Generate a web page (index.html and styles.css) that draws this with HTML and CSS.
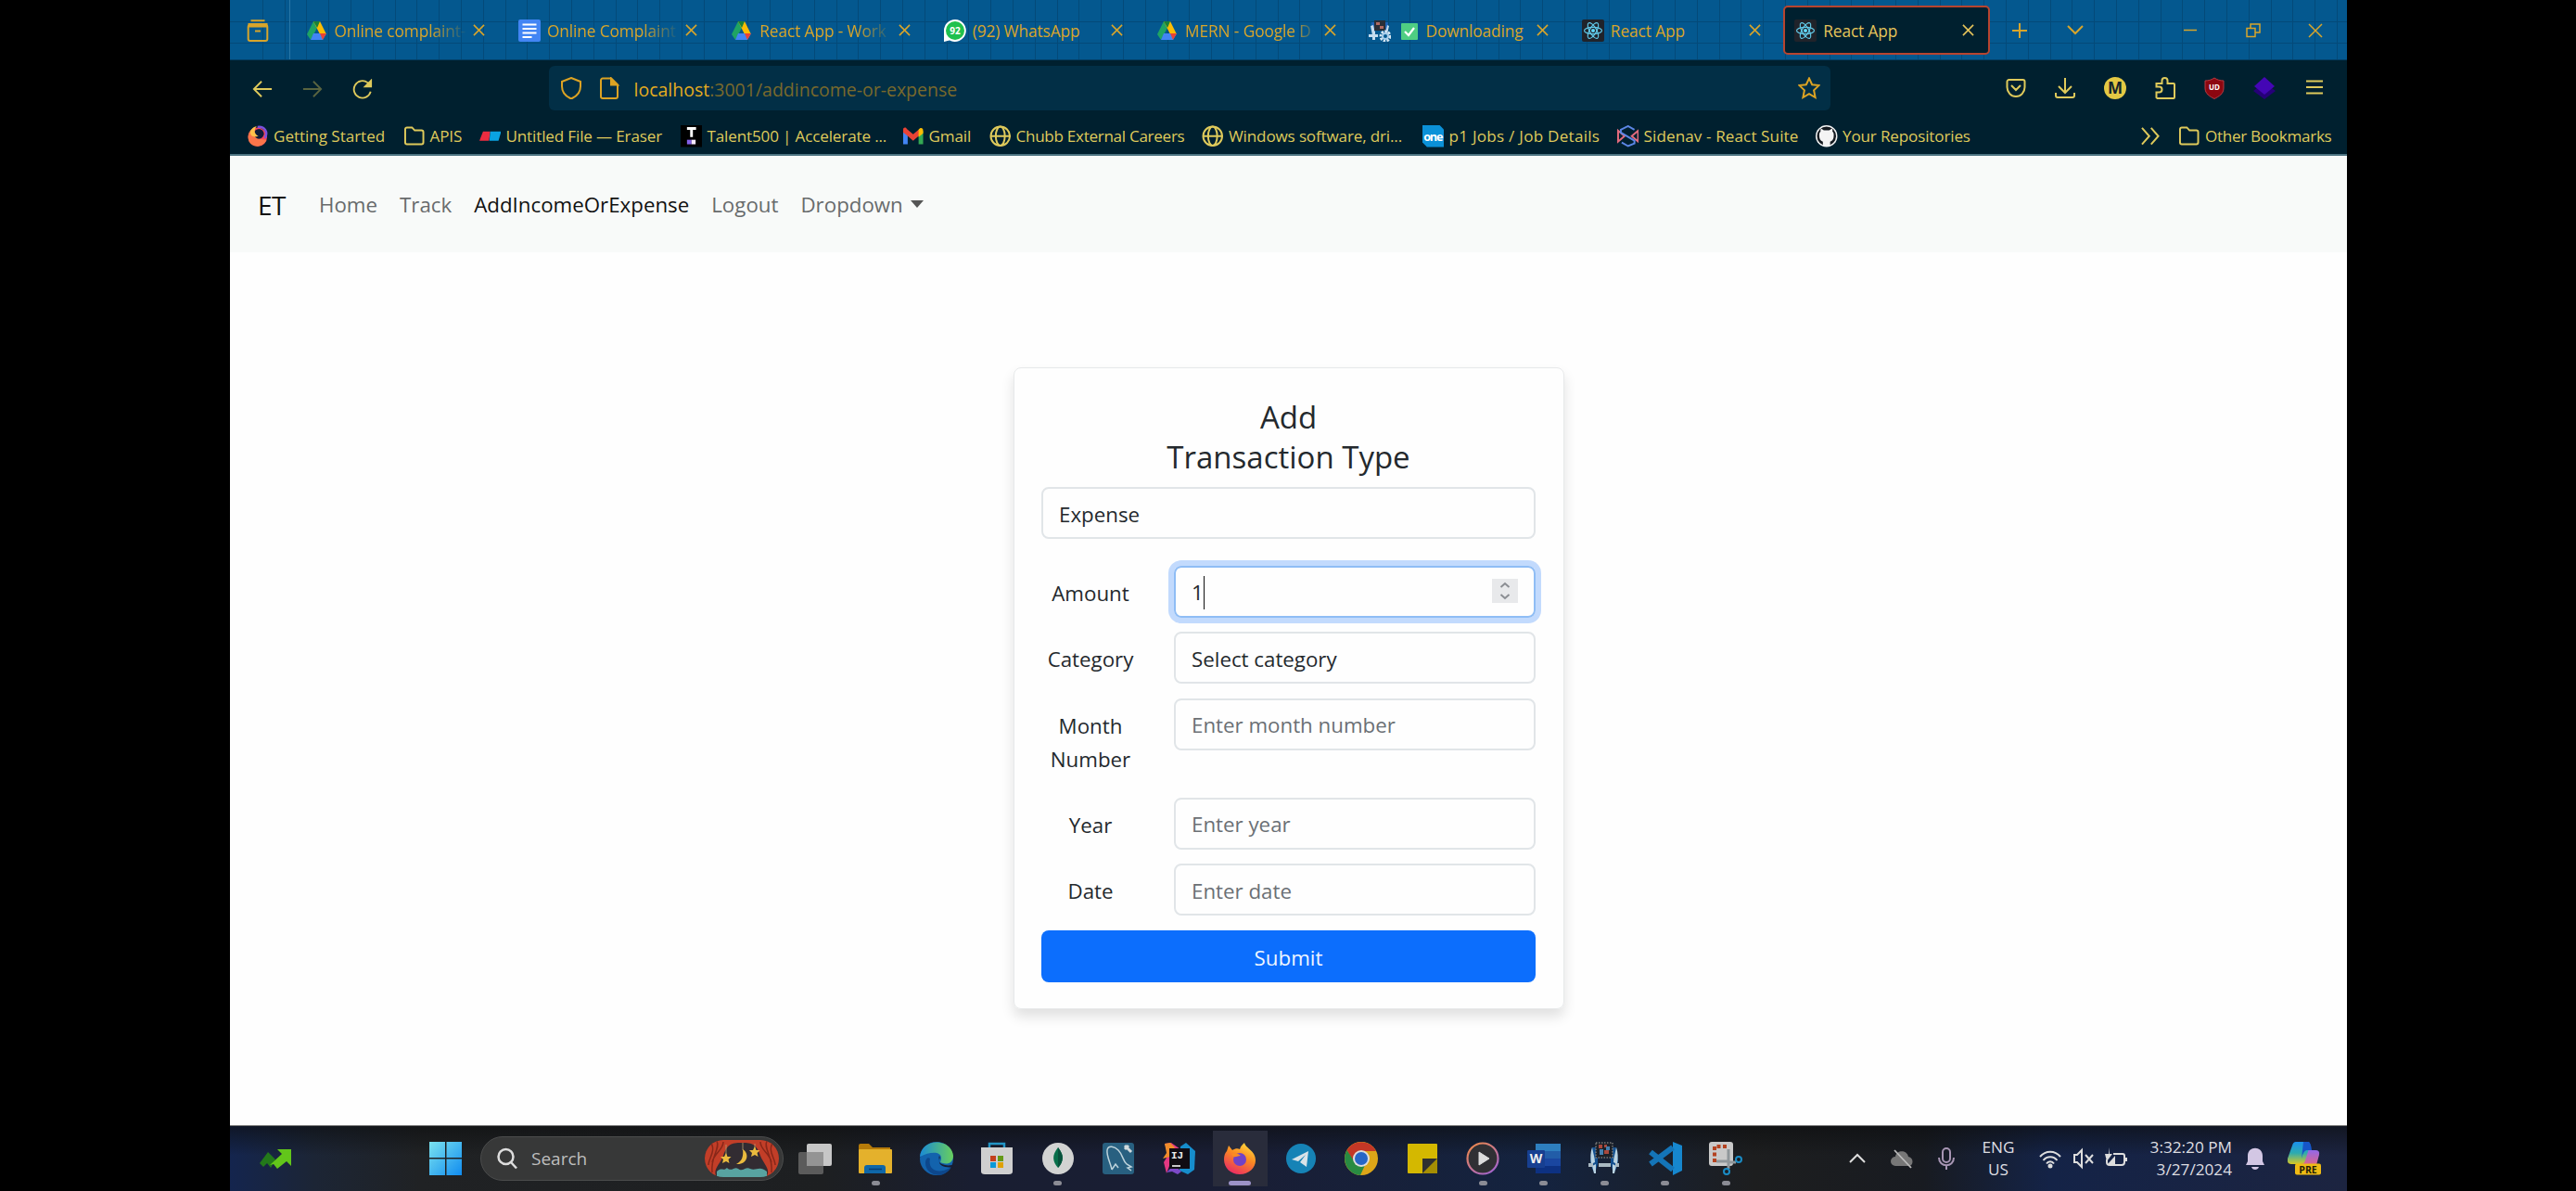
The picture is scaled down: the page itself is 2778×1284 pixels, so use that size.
FILE: index.html
```html
<!DOCTYPE html>
<html lang="en">
<head>
<meta charset="utf-8">
<title>React App</title>
<link rel="stylesheet" href="styles.css">
</head>
<body>
<svg class="defs" width="0" height="0" aria-hidden="true">
  <symbol id="drive" viewBox="0 0 24 24"><path fill="#1fa463" d="M8 2 1 16l4 6L12 9z"/><path fill="#fbbc04" d="M8 2h7l7 14h-7z"/><path fill="#4285f4" d="M5 22l3-7h14l-4 7z"/><path fill="#ea4335" d="M15 15h7l-4 7z"/><path fill="#188038" d="M8 2h7l-3 7z"/></symbol>
  <symbol id="x" viewBox="0 0 14 14"><path d="M1 1 13 13M13 1 1 13"/></symbol>
  <symbol id="react" viewBox="0 0 24 24"><rect width="24" height="24" rx="2" fill="#20232a"/><g fill="none" stroke="#61c9e8" stroke-width="1.2"><ellipse cx="12" cy="12" rx="9.500" ry="3.700"/><ellipse cx="12" cy="12" rx="9.500" ry="3.700" transform="rotate(60 12 12)"/><ellipse cx="12" cy="12" rx="9.500" ry="3.700" transform="rotate(120 12 12)"/></g><circle cx="12" cy="12" r="2" fill="#61dafb"/></symbol>
  <symbol id="folder" viewBox="0 0 24 24"><path d="M2 19V4.500a2 2 0 0 1 2-2h5.500l3 3.200H20a2 2 0 0 1 2 2V19a2 2 0 0 1-2 2H4a2 2 0 0 1-2-2z"/></symbol>
  <symbol id="globe" viewBox="0 0 24 24"><circle cx="12" cy="12" r="10.500"/><ellipse cx="12" cy="12" rx="5" ry="10.500"/><path d="M1.500 12h21"/></symbol>
  <symbol id="robot" viewBox="0 0 36 36"><path fill="#14508f" d="M5 6h4l2 8v10l-3 10-3-5-2-8zM31 6h-4l-2 8v10l3 10 3-5 2-8z"/><path fill="#b9d3e2" d="M5 6c1 6 3 11 3 16l-4 2c-1-7-1-13 1-18zM31 6c-1 6-3 11-3 16l4 2c1-7 1-13-1-18zM5 26l4-2v10H7zM31 26l-4-2v10h2z"/><path fill="#a9b9c2" d="M1 23h5v4H1zM12 23h13v4H12zM30 23h4v4h-4z"/><rect x="9" y="1" width="18" height="16" fill="#1b2028" stroke="#777" stroke-width="1.500" stroke-dasharray="1.500"/><path fill="#a8483d" d="M12 3h4v4h-4zM18 3h3v3h-3zM18 9h5v4h-5z"/><path fill="#4480b0" d="M13 8h4v6h-4zM20 5h4v4h-4z"/></symbol>
  <symbol id="firefox" viewBox="0 0 36 36"><defs><linearGradient id="ffg" x1=".8" y1="0" x2=".3" y2="1"><stop offset="0" stop-color="#ffdf3e"/><stop offset=".45" stop-color="#fb8a22"/><stop offset="1" stop-color="#e92a64"/></linearGradient></defs><path fill="url(#ffg)" d="M6 4l4 5c3-2 6-2 8-1 1-4 4-6 5-7 1 6 12 8 12 19 0 8-7 15-17 15S1 28 1 19c0-4 1-7 3-9z"/><circle cx="18" cy="19" r="7" fill="#7142c6"/><path fill="#fb8a22" d="M9 13c5-2 8 0 10 2-4 0-5 2-8 1z"/></symbol>
</svg>
<div class="screen">
  <header class="browser">
    <div class="tabs">
      <div class="history"><svg class="line" width="24" height="24" viewBox="0 0 24 24"><path d="M4.500 1.300h15M2.500 5h19v2.500h-19z"/><rect x="1.700" y="6" width="20.600" height="17" rx="2"/><path d="M9 12.500h6"/></svg></div>
      <div class="tab"><svg class="fav"><use href="#drive"/></svg><span class="title fade">Online complaint-</span><svg class="close"><use href="#x"/></svg></div>
      <div class="tab"><svg class="fav" viewBox="0 0 24 24"><rect width="24" height="24" rx="2" fill="#4285f4"/><path stroke="#fff" stroke-width="2" d="M4.500 5.500h15M4.500 10h15M4.500 14.500h15M4.500 19h10"/></svg><span class="title fade">Online Complaint</span><svg class="close"><use href="#x"/></svg></div>
      <div class="tab"><svg class="fav"><use href="#drive"/></svg><span class="title fade">React App - Work</span><svg class="close"><use href="#x"/></svg></div>
      <div class="tab"><svg class="fav" viewBox="0 0 24 24"><path fill="#fff" d="M12 0a12 12 0 1 1-6 22.500L0 24V12A12 12 0 0 1 12 0z"/><circle cx="12" cy="12" r="10" fill="#1fc14d"/><text x="12" y="16" class="badge92">92</text></svg><span class="title">(92) WhatsApp</span><svg class="close"><use href="#x"/></svg></div>
      <div class="tab"><svg class="fav"><use href="#drive"/></svg><span class="title fade strong">MERN - Google D</span><svg class="close"><use href="#x"/></svg></div>
      <div class="tab"><svg class="fav" viewBox="0 0 24 24"><path fill="#1d63b8" d="M3 3h4v13H4zM17 3h4l-1 13h-3z"/><path fill="#c5dcee" d="M2 7l3-1 2 9-3 2zM22 7l-2-1-2 9 2 1zM0 16h10v3H0zM4 13h3v9H4z"/><rect x="6" y="1" width="12" height="11" fill="#2a2f38"/><path fill="#b06a62" d="M8 3h4v3H8zM12 7h4v3h-4z"/><circle cx="18" cy="18" r="5" fill="none" stroke="#d5e6f2" stroke-width="3" stroke-dasharray="2.500 1.200"/><circle cx="18" cy="18" r="3" fill="none" stroke="#a8cdea" stroke-width="2"/></svg><span class="title check"><svg width="18" height="18" viewBox="0 0 18 18"><rect width="18" height="18" rx="1" fill="#4fce82"/><path d="M4 9l4 4 6-8" fill="none" stroke="#fff" stroke-width="2.200"/></svg>Downloading</span><svg class="close"><use href="#x"/></svg></div>
      <div class="tab"><svg class="fav"><use href="#react"/></svg><span class="title">React App</span><svg class="close"><use href="#x"/></svg></div>
      <div class="tab active"><svg class="fav"><use href="#react"/></svg><span class="title">React App</span><svg class="close"><use href="#x"/></svg></div>
      <div class="controls">
        <svg class="line" viewBox="0 0 18 18"><path d="M9 1v16M1 9h16"/></svg>
        <svg class="line" viewBox="0 0 18 18"><path d="M1 4l8 8 8-8"/></svg>
        <svg class="line thin" viewBox="0 0 18 18"><path d="M2 8.500h14"/></svg>
        <svg class="line thin" viewBox="0 0 18 18"><path d="M2 6.500h9v9H2zM6 6V2h10v9h-5"/></svg>
        <svg class="line thin" viewBox="0 0 18 18"><path d="M2 2l14 14M16 2 2 16"/></svg>
      </div>
    </div>
    <div class="toolbar">
      <div class="nav-icons">
        <svg class="line" viewBox="0 0 24 24"><path d="M23 12H2M11 3l-9 9 9 9"/></svg>
        <svg class="line dim" viewBox="0 0 24 24"><path d="M1 12h21M13 3l9 9-9 9"/></svg>
        <svg class="line" viewBox="0 0 24 24"><path d="M21.500 15A10 10 0 1 1 18 4.500l3 3"/><path fill="currentColor" d="M22 2v7h-7z"/></svg>
      </div>
      <div class="url">
        <svg class="line" viewBox="0 0 24 24"><path d="M12 1 22 5v5c0 7-4 11-10 13.500C6 21 2 17 2 10V5z"/></svg>
        <svg class="line page-icon" viewBox="0 0 24 24"><path d="M14 1.500H5a2 2 0 0 0-2 2V21a2 2 0 0 0 2 2h14a2 2 0 0 0 2-2V8.500z"/><path fill="currentColor" d="M14 1.500v7h7z"/></svg>
        <span class="address"><b>localhost</b>:3001/addincome-or-expense</span>
        <svg class="line star" viewBox="0 0 24 24"><path d="M12 1.500l3.200 6.800 7.300.8-5.400 5.200 1.500 7.700L12 18.200 5.400 22l1.500-7.700L1.500 9.100l7.300-.8z"/></svg>
      </div>
      <div class="actions">
        <svg class="line" viewBox="0 0 24 24"><path d="M4.500 3h15a2 2 0 0 1 2 2v6a9.500 10 0 0 1-19 0V5a2 2 0 0 1 2-2zM7 9l5 5 5-5"/></svg>
        <svg class="line" viewBox="0 0 24 24"><path d="M12 1v15M5 10l7 7 7-7M2 17v3a2 2 0 0 0 2 2h16a2 2 0 0 0 2-2v-3"/></svg>
        <svg viewBox="0 0 24 24"><circle cx="12" cy="12" r="12" fill="#e4c944"/><text x="12" y="18" class="letter-m">M</text></svg>
        <svg class="line" viewBox="0 0 24 24"><path d="M2.500 22v-5.500h3a3 3 0 0 0 0-6h-3V7h6V4a3 3 0 0 1 6 0v3H21a1 1 0 0 1 1 1v14a1 1 0 0 1-1 1H3.500z"/></svg>
        <svg viewBox="0 0 24 24"><path fill="#8c0710" stroke="#b53b42" d="M12 1c3 2 6 3 10 3v8c0 6-5 9-10 11.500C7 21 2 18 2 12V4c4 0 7-1 10-3z"/><text x="12" y="14" class="letter-u">UD</text></svg>
        <svg viewBox="0 0 24 24"><path fill="#260078" d="M12 6 24 15 12 24 0 15z"/><path fill="#4406b5" d="M12 0 23 10 12 19 1 10z"/></svg>
        <svg class="line" viewBox="0 0 24 24"><path d="M3 4.500h18M3 11h18M3 17.500h18"/></svg>
      </div>
    </div>
    <div class="bookmarks">
      <div class="bm"><svg viewBox="0 0 24 24"><circle cx="12" cy="13" r="10.500" fill="#f4455a"/><path fill="#ff9640" d="M1.500 13C2 6 6 3 10 2c-3 5 0 14 12 14C18 26 2 26 1.500 13z" opacity=".6"/><circle cx="13.500" cy="9.500" r="5.500" fill="#101b39"/><path fill="#ffc04a" d="M4 8c0-3 3-6 7-7-4 5-2 9 2 11-5 2-9 0-9-4z"/><path d="M12 2c8-1 12 6 8 12" fill="none" stroke="#7b50dd" stroke-width="2.500"/></svg>Getting Started</div>
      <div class="bm"><svg class="line"><use href="#folder"/></svg>APIS</div>
      <div class="bm"><svg viewBox="0 0 24 24"><path fill="#ec2c40" d="M4 7h8l-1.500 10H0z"/><path fill="#0aa3e3" d="M12 7h12l-3 10H11z"/></svg>Untitled File — Eraser</div>
      <div class="bm"><svg viewBox="0 0 24 24"><rect width="24" height="24"/><path fill="#fff" d="M7 2h10v3h-3.500v8h-3V5H7z"/><path fill="#8360e8" d="M7 16h5v5H7z"/><path fill="#f5e9ff" d="M12 16h4.500v5H12z"/></svg>Talent500 | Accelerate ...</div>
      <div class="bm"><svg viewBox="0 0 24 24"><path fill="#4285f4" d="M1 6l5 4v11H1z"/><path fill="#34a853" d="M18 10l5-4v15h-5z"/><path fill="#ea4335" d="M1 5c0-3 3-3 4-1l7 6 7-6v7l-7 6-7-6-4-3z"/><path fill="#fbbc04" d="M18 5c2-3 5-2 5 1v3l-5 4z"/></svg>Gmail</div>
      <div class="bm"><svg class="line"><use href="#globe"/></svg>Chubb External Careers</div>
      <div class="bm"><svg class="line"><use href="#globe"/></svg>Windows software, dri...</div>
      <div class="bm"><svg viewBox="0 0 24 24"><path fill="#0b91d8" d="M0 0h19l5 5v19H5l-5-5z"/><text x="11.500" y="17" class="letter-one">one</text></svg>p1 Jobs / Job Details</div>
      <div class="bm"><svg viewBox="0 0 24 24" fill="none" stroke-width="2"><path stroke="#e46b7d" d="M8 12 1 18V6zM16 12l7-6v12z"/><path stroke="#5c87e6" d="M19 5l-7-4-8 4v3l15 9v3l-7 3-7-4"/></svg>Sidenav - React Suite</div>
      <div class="bm"><svg viewBox="0 0 24 24"><circle cx="12" cy="12" r="12" fill="#f4f4f4"/><circle cx="12" cy="12" r="10.500" fill="#151a20"/><path fill="#f4f4f4" d="M8 23v-5c-3-1-4-3-4-7 0-2 .5-3 1.500-4-.3-1-.2-2 .2-3 1.300 0 2.300.7 3.300 1.500h6C16 4.700 17 4 18.300 4c.4 1 .5 2 .2 3 1 1 1.500 2 1.500 4 0 4-1 6-4 7v5z"/></svg>Your Repositories</div>
      <div class="bm"><svg class="line" viewBox="0 0 24 24"><path d="M2 3l8 9-8 9M12 3l8 9-8 9"/></svg></div>
      <div class="bm"><svg class="line"><use href="#folder"/></svg>Other Bookmarks</div>
    </div>
  </header>

  <nav class="navbar">
    <a class="brand">ET</a><a>Home</a><a>Track</a><a class="current">AddIncomeOrExpense</a><a>Logout</a><a class="drop">Dropdown</a>
  </nav>

  <main class="page">
    <form class="card">
      <h2>Add<br>Transaction Type</h2>
      <div class="field type">Expense</div>
      <div class="row"><label>Amount</label><div class="field focus"><span class="typed">1</span><svg class="spin" viewBox="0 0 28 26"><path d="M9.500 9l4.500-4 4.500 4M9.500 17l4.500 4 4.500-4"/></svg></div></div>
      <div class="row"><label>Category</label><div class="field">Select category</div></div>
      <div class="row tall"><label>Month<br>Number</label><input class="field" placeholder="Enter month number"></div>
      <div class="row"><label>Year</label><input class="field" placeholder="Enter year"></div>
      <div class="row"><label>Date</label><input class="field" placeholder="Enter date"></div>
      <button class="submit" type="button">Submit</button>
    </form>
  </main>

  <footer class="taskbar">
    <div class="widget"><svg width="35" height="22" viewBox="0 0 35 22"><path fill="#23791a" d="M0 16 9 4l8 8-5 9-4-5-4 4z"/><path fill="#62c61a" d="M11 18 24 6l-5-5h15v18l-5-5-10 8-4-5z"/></svg></div>
    <div class="start"><svg width="35" height="36" viewBox="0 0 35 36"><defs><linearGradient id="wg" x1="0" y1="0" x2="1" y2="1"><stop offset="0" stop-color="#7be3ef"/><stop offset="1" stop-color="#108cf0"/></linearGradient></defs><path fill="url(#wg)" d="M0 0h17v17H0zM18.500 0H35v17H18.500zM0 18.500h17V36H0zM18.500 18.500H35V36H18.500z"/></svg></div>
    <div class="search">
      <svg width="23" height="24" viewBox="0 0 23 24" fill="none" stroke="#ddd" stroke-width="2.500"><circle cx="9.500" cy="10" r="8"/><path d="M15 16l6 6.500"/></svg>
      <span>Search</span>
      <svg class="theatre" width="80" height="40" viewBox="0 0 80 40"><defs><clipPath id="tc"><rect width="80" height="40" rx="20"/></clipPath></defs><g clip-path="url(#tc)"><rect width="80" height="40" fill="#322c32"/><path fill="#c23e28" d="M0 0h80v40H66c6-8-2-13-6-23C56 5 52 3 40 3S24 5 20 17c-4 10-12 15-7 23H0z"/><path fill="none" stroke="#872719" stroke-width="1.500" d="M6 2c7 9-2 18-2 25M13 1c4 9-7 16-5 34M20 2c0 9-10 12-12 22M74 2c-7 9 2 18 2 25M67 1c-4 9 7 16 5 34M60 2c0 9 10 12 12 22"/><path fill="#58a3a0" d="M13 34c5-5 7 0 11-4 5 5 8-2 12 1 5 4 8-3 13 0 6 3 10-4 18 3v7H13z"/></g><path fill="none" stroke="#b8a070" stroke-width=".8" d="M23 5v12M41 3v8M54 4v6"/><path fill="#eabb3e" d="M41 10c8 5 5 17-7 16 6-3 8-8 7-16zM23 14l1.500 4h4l-3 3 1 4-3.500-2-4 2 1-4-3-3h4zM54 7l1.500 4h4l-3 3 1 4-3.500-2-4 2 1-4-3-3h4z"/></svg>
    </div>
    <div class="apps">
      <div><svg viewBox="0 0 36 36"><rect y="11" width="27" height="24" rx="2" fill="#5b5b5b"/><rect x="9" y="2" width="27" height="24" rx="2" fill="#c7c7c7"/><path fill="#949494" d="M9 11h18v15H9z"/></svg></div>
      <div class="open"><svg viewBox="0 0 36 36"><path fill="#b67b09" d="M0 4q0-2 2-2h9l4 4h19v9H0z"/><rect y="8" width="36" height="26" rx="1" fill="#e4b12c"/><path fill="#0f67a8" d="M6 34v-6q0-3 3-3h17q3 0 3 3v6z"/><path stroke="#053e75" stroke-width="1.500" d="M11 29.500h14"/></svg></div>
      <div><svg viewBox="0 0 36 36"><defs><linearGradient id="eg"><stop stop-color="#1a8ad5"/><stop offset="1" stop-color="#68cf5d"/></linearGradient></defs><circle cx="18" cy="18" r="18" fill="#1363ad"/><path fill="url(#eg)" d="M0 16C2-5 34-4 36 15c0 9-8 10-14 7 5-12-9-13-22-6z"/><path fill="#0d478c" d="M11 18c-3 13 10 18 23 9-8 15-28 9-28-4 0-4 2-7 5-5z"/><path fill="#171d32" d="M21 15c2 3-2 5 1 8 3 2 7 3 13 2l2 2c-10 2-17-2-16-6 0-2-1-4 0-6z"/></svg></div>
      <div><svg viewBox="0 0 36 36"><path d="M10 8V2h16v6" fill="none" stroke="#2295c5" stroke-width="2.500"/><path fill="#cfcfcf" d="M1 6h34v26q0 3-4 3H5q-4 0-4-3z"/><path fill="#c3411e" d="M11 15h6v6h-6z"/><path fill="#649a18" d="M19 15h6v6h-6z"/><path fill="#0999d8" d="M11 22h6v6h-6z"/><path fill="#dfa104" d="M19 22h6v6h-6z"/></svg></div>
      <div class="open"><svg viewBox="0 0 36 36"><circle cx="18" cy="18" r="17" fill="#d2d3d2"/><path fill="#08704b" d="M18 6c7 9 6 15 0 22-6-7-7-13 0-22z"/><path fill="#07523c" d="M18 6c7 9 6 15 0 22z"/></svg></div>
      <div><svg viewBox="0 0 36 36"><rect x="1" y="1" width="34" height="34" rx="3" fill="#286080"/><path fill="none" stroke="#bdd3db" stroke-width="1.500" d="M11 30c-1-6-6-15-5-21s8-4 12 0c5 5 5 12 9 15l5 3-4 1 4 3M11 30l4-6 3 4"/><path stroke="#d1dadd" stroke-width="3" d="M25 4l7 7M25 8l4-4"/></svg></div>
      <div><svg viewBox="0 0 36 36"><path fill="#e33882" d="M2 2 9 1l10 7-9 10-6 16-3-12 5-8z"/><path fill="#ef8c2b" d="M2 2l6-1 5 5-5 10-8 2 4-6z"/><path fill="#168dcc" d="M19 5l6-4 10 9-1 20-7 5-9-4z"/><path fill="#7c49c8" d="M4 33l8-8 8 7-4 3-6-3z"/><rect x="7" y="7" width="22" height="22" fill="#100c13"/><path stroke="#ddd" stroke-width="1.800" d="M10 26h9"/><text x="9" y="18" class="letter-ij">IJ</text></svg></div>
      <div class="open selected"><svg><use href="#firefox"/></svg></div>
      <div><svg viewBox="0 0 36 36"><circle cx="18" cy="18" r="16" fill="#1683b6"/><path fill="#d9e3e8" d="M8 19 26 10l-2 17-7-5 6-8-8 7z"/></svg></div>
      <div><svg viewBox="0 0 36 36"><circle cx="18" cy="18" r="18" fill="#dda618"/><path fill="#c33726" d="M2.500 9A18 18 0 0 1 34 10H18l-8 12z"/><path fill="#288b42" d="M2.500 9 11 22l12 1-6 13A18 18 0 0 1 2.500 9z"/><circle cx="18" cy="18" r="9" fill="#ddd"/><circle cx="18" cy="18" r="7" fill="#2766c6"/></svg></div>
      <div><svg viewBox="0 0 36 36"><rect x="2" y="2" width="32" height="32" rx="1" fill="#d4b800"/><path fill="#a58e03" d="M34 18v16H18z"/><path fill="#2f3030" d="M18 34V18h16z"/></svg></div>
      <div class="open"><svg viewBox="0 0 36 36"><defs><linearGradient id="mg" x2=".7" y2="1"><stop stop-color="#f28a42"/><stop offset="1" stop-color="#a666c8"/></linearGradient></defs><circle cx="18" cy="18" r="16.500" fill="#303034" stroke="url(#mg)" stroke-width="2.200"/><path fill="#ddd" stroke="#ddd" stroke-linejoin="round" d="M14 11l11 7-11 7z"/></svg></div>
      <div class="open"><svg viewBox="0 0 36 36"><path fill="#2e7fbf" d="M9 2h27v8H9z"/><path fill="#225da8" d="M9 10h27v8H9z"/><path fill="#1a46a0" d="M9 18h27v8H9z"/><path fill="#0d3182" d="M9 26h27v8H9z"/><rect y="9" width="19" height="19" rx="1" fill="#173f91"/><text x="9.500" y="23" class="letter-w">W</text></svg></div>
      <div class="open"><svg><use href="#robot"/></svg></div>
      <div class="open"><svg viewBox="0 0 36 36"><path fill="#1687ce" d="M26 0l10 4v27l-10 5z"/><path fill="none" stroke="#1475b8" stroke-width="6" d="M2 11l24 19M2 24 26 6"/></svg></div>
      <div class="open"><svg viewBox="0 0 36 36"><rect width="26" height="26" rx="3" fill="#c9c9c9"/><path fill="none" stroke="#b44321" stroke-width="4" stroke-dasharray="4 2.500" d="M6 22V5h15"/><path fill="none" stroke="#8f969a" stroke-width="3" d="M21 8v14h8M8 21h13v8"/><circle cx="32" cy="19" r="3" fill="none" stroke="#1a8cc5" stroke-width="2"/><circle cx="19" cy="32" r="3" fill="none" stroke="#1a8cc5" stroke-width="2"/></svg></div>
    </div>
    <div class="tray">
      <svg viewBox="0 0 24 24"><path d="M4 16l8-8 8 8"/></svg>
      <svg viewBox="0 0 24 24"><path fill="#777" stroke="none" d="M5 20a5 5 0 0 1 0-10c1-7 12-8 14 0 6 1 6 10 0 10z"/><path stroke="#bbb" stroke-width="1.800" d="M4 3l18 19"/></svg>
      <svg class="mic" viewBox="0 0 24 24"><rect x="8" y="1" width="8" height="15" rx="4"/><path d="M4 11c0 11 16 11 16 0M12 19v5"/></svg>
      <div class="two">ENG<br>US</div>
      <svg viewBox="0 0 24 24"><path d="M1 10c6-7 16-7 22 0M4.500 14c4-5 11-5 15 0M8 17.500c2-3 6-3 8 0"/><circle cx="12" cy="20" r="1.500" fill="#ddd"/></svg>
      <svg viewBox="0 0 24 24"><path d="M2 8h3l5-5v18l-5-5H2zM14 8l8 9M22 8l-8 9"/></svg>
      <svg viewBox="0 0 24 24"><path d="M9 7h10q2 0 2 2v7q0 3-3 3H5q-3 0-3-3v-3M23 11v4"/><path fill="#ddd" stroke="none" d="M4 0v7H0l2 8 6-8H5zM3 18l8-9v9z"/></svg>
      <div class="two clock">3:32:20 PM<br>3/27/2024</div>
      <svg viewBox="0 0 24 24"><path fill="#d3c7e4" stroke="none" d="M2 19l2-4V9c0-11 16-11 16 0v6l2 4zM8 21h8c-1 4-7 4-8 0z"/></svg>
      <svg class="copilot" viewBox="0 0 36 36"><defs><linearGradient id="cg" x2="0" y2="1"><stop stop-color="#1b90ed"/><stop offset=".5" stop-color="#2cabb0"/><stop offset="1" stop-color="#d8c824"/></linearGradient><linearGradient id="cp" x2="0" y2="1"><stop stop-color="#9268e8"/><stop offset="1" stop-color="#ec6577"/></linearGradient></defs><path fill="url(#cp)" stroke="none" d="M20 9h10q5 0 4 5l-3 11q-2 4-8 3h-9z"/><path fill="url(#cg)" stroke="none" d="M9 0h12q4 0 3 4l-5 16q-1 4-5 4H4q-5 0-4-6L5 4q1-4 4-4z"/><path fill="#1656c8" stroke="none" d="M17 0h5q3 0 4 9h-5q-4 0-6 9z"/><rect x="8" y="23.500" width="28" height="12" rx="2" fill="#efbb14" stroke="none"/><text x="22" y="33.500" class="letter-pre">PRE</text></svg>
    </div>
  </footer>
</div>
</body>
</html>
```

FILE: styles.css
```css
* { box-sizing: border-box; }
body { margin: 0; background: #000; font-family: "Open Sans", "Noto Sans", sans-serif; }
svg { display: block; flex: none; }
.defs { position: absolute; }
.screen { width: 2283px; height: 1284px; margin-left: 248px; display: flex; flex-direction: column; background: #fefefe; }
.line { fill: none; stroke: currentColor; stroke-width: 2; }
.thin { stroke-width: 1.5; }

.browser { height: 168px; background: #00202f; border-bottom: 2px solid #4d7482; color: #dfca5b; }
.tabs {
  height: 65px; display: flex; align-items: center; color: #d8a52b; border-bottom: 1px solid #033e65;
  background:
    repeating-linear-gradient(90deg, transparent 0 22.800px, #044a79 22.800px 23.800px) 12px 0,
    repeating-linear-gradient(180deg, transparent 0 22.500px, #044a79 22.500px 23.500px),
    #04588f;
}
.history { width: 64.500px; height: 64px; padding: 2px 0 0 18px; display: flex; align-items: center; border-right: 1px solid #2977a6; margin-right: 5px; }
.tab { width: 223px; height: 53px; margin-right: 6.400px; padding: 1px 0 0 12px; display: flex; align-items: center; border-radius: 5px; }
.active { background: #00202f; border: 2px solid #b8442f; padding: 1px 0 0 10px; color: #e4c35a; }
.fav { width: 24px; height: 24px; margin-right: 7px; }
.title { width: 143.500px; padding-top: 2px; font-size: 17.300px; line-height: 24px; letter-spacing: -.1px; white-space: nowrap; }
.fade { -webkit-mask-image: linear-gradient(90deg, #000 72%, transparent); mask-image: linear-gradient(90deg, #000 72%, transparent); }
.strong { -webkit-mask-image: linear-gradient(90deg, #000 80%, transparent); mask-image: linear-gradient(90deg, #000 80%, transparent); }
.check { display: flex; align-items: center; gap: 8px; padding-left: 4px; }
.close { width: 13px; height: 13px; margin-left: 6px; stroke: currentColor; stroke-width: 1.7; }
.controls { display: grid; grid-template-columns: 60px 124px 68px 67px 18px; padding: 1px 0 0 16px; }
.controls svg { width: 18px; height: 18px; }
.badge92 { font: bold 10px "Open Sans", sans-serif; fill: #fff; text-anchor: middle; }

.toolbar { height: 60px; display: flex; align-items: center; }
.nav-icons { display: flex; gap: 32px; width: 343.500px; padding: 1px 0 0 24px; }
.nav-icons svg { width: 22px; height: 22px; }
.dim { opacity: .4; }
.url { width: 1382px; height: 48px; display: flex; align-items: center; border-radius: 6px; background: #022f46; color: #dda323; padding-left: 12px; }
.url svg { width: 24px; height: 24px; margin-right: 18px; }
.url .page-icon { margin-left: -1px; }
.address { flex: 1; padding-top: 3px; font-size: 19.500px; color: #79692c; margin-left: -3px; white-space: nowrap; }
.address b { font-weight: 400; color: #e5ac20; }
.url .star { margin-right: 11px; }
.actions { display: flex; gap: 29.700px; margin-left: 188px; }
.actions svg { width: 24px; height: 24px; }
.letter-m { font: bold 17px "Open Sans", sans-serif; fill: #14242b; text-anchor: middle; }
.letter-u { font: bold 8px "Open Sans", sans-serif; fill: #fff; text-anchor: middle; }
.letter-one { font: bold 13px "Open Sans", sans-serif; fill: #fff; text-anchor: middle; letter-spacing: -1.200px; }
.bookmarks { height: 42px; padding: 2px 0 0 18px; display: grid; align-items: center; grid-template-columns: 168.500px 82px 217px 239px 94px 229.500px 237.500px 210px 214.500px 349.500px 41.500px 190px; }
.bm { display: flex; align-items: center; gap: 5.500px; font-size: 17.100px; letter-spacing: -.16px; line-height: 24px; white-space: nowrap; }
.bm svg { width: 23.500px; height: 23.500px; }
.bm:nth-child(1) { letter-spacing: -.05px; }
.bm:nth-child(8) { letter-spacing: .25px; }
.bm:nth-child(9) { letter-spacing: .1px; }
.bm:nth-child(6), .bm:nth-child(12) { letter-spacing: -.3px; }

.navbar { height: 104px; background: #f8faf9; padding: 1px 0 0 30px; display: flex; align-items: center; font-size: 22.300px; color: #686b6c; }
.navbar a { margin-right: 24px; line-height: 34px; }
.navbar .brand { font-size: 28px; color: #111; margin-right: 36px; letter-spacing: -.5px; }
.navbar .current { color: #111; }
.drop::after { content: ""; display: inline-block; margin-left: 8px; vertical-align: 5px; border: 7px solid transparent; border-top: 8px solid #555; border-bottom: 0; }

.page { height: 941px; padding-top: 123.500px; }
.card { width: 594px; height: 692px; margin: 0 auto; padding: 31px 29.500px 0; border: 1px solid #e7e9ea; border-radius: 8px; box-shadow: 0 8px 14px rgba(0,0,0,.12); color: #24292d; font-size: 22.300px; }
h2 { margin: 0 0 11.500px; font-size: 33px; font-weight: 400; line-height: 43px; text-align: center; }
.field { width: 390px; height: 56px; margin: 0; padding: 2px 17px 0; border: 2px solid #e1e5e8; border-radius: 8px; background: transparent; display: flex; align-items: center; font: inherit; color: inherit; outline: 0; }
.field::placeholder { color: #6b7075; opacity: 1; }
.type { width: 533px; margin-bottom: 29px; }
.row { height: 71.400px; display: flex; justify-content: space-between; }
.tall { height: 107px; }
.row label { width: 106px; padding-top: 12px; text-align: center; line-height: 36px; }
.focus { border-color: #8fbdf5; box-shadow: 0 0 0 6px #c2dafd; justify-content: space-between; }
.typed { border-right: 1px solid #111; line-height: 36px; }
.spin { width: 28px; height: 26px; margin-top: -4px; background: #e8e9eb; fill: none; stroke: #8b8e93; stroke-width: 2; }
.submit { width: 533px; height: 56px; padding: 3px 0 0; border: 0; border-radius: 8px; background: #0c6efd; color: #eef5ff; font: inherit; }

.taskbar {
  height: 71px; border-top: 1px solid #777; display: flex; align-items: center;
  background: linear-gradient(180deg, rgba(12,13,14,.6), transparent 45%), linear-gradient(90deg, #14254e 0, #1c2535 4%, #202224 9%, #1d1f21 28%, #191e31 35%, #191e35 48%, #14233f 62%, #1d1e1f 72%, #181b21 80%, #142347 86%, #1c2440 100%);
}
.widget { width: 215px; padding-left: 32px; }
.start { width: 55px; }
.search { width: 327px; height: 48px; display: flex; align-items: center; border: 1px solid #4b4c4c; border-radius: 24px; background: #373838; padding: 0 4px 0 17px; color: #bebebe; font-size: 19px; }
.search span { flex: 1; margin-left: 14px; }
.apps { display: flex; margin-left: 1px; }
.apps div { position: relative; width: 65.500px; height: 60px; display: flex; align-items: center; justify-content: center; }
.apps svg { width: 36px; height: 36px; }
.apps .selected { background: linear-gradient(#292c3b, #292c3b) center / 59px 60px no-repeat; }
.open::after { content: ""; position: absolute; bottom: 1px; left: calc(50% - 4.500px); width: 9px; height: 5px; border-radius: 3px; background: #8b8c95; }
.selected::after { width: 24px; left: calc(50% - 12px); background: #9b92c8; }
.letter-ij { font: bold 11px "Liberation Mono", monospace; fill: #eee; }
.letter-w { font: bold 14px "Open Sans", sans-serif; fill: #eee; text-anchor: middle; }
.letter-pre { font: bold 10.500px "Open Sans", sans-serif; fill: #231d08; text-anchor: middle; stroke: none; }
.tray { display: grid; align-items: center; grid-template-columns: 48px 48px 44px 68px 35.500px 35.500px 47px 103px 46.500px 36px; margin-left: 97px; }
.tray svg { width: 24px; height: 24px; fill: none; stroke: #ddd; stroke-width: 2; }
.tray .mic { stroke: #a795b3; }
.tray .copilot { width: 36px; height: 36px; }
.two { width: 40px; margin-left: 4px; font-size: 17.200px; line-height: 24.500px; text-align: center; color: #dedee2; white-space: nowrap; }
.clock { width: 90px; margin-left: 0; text-align: right; }
```
